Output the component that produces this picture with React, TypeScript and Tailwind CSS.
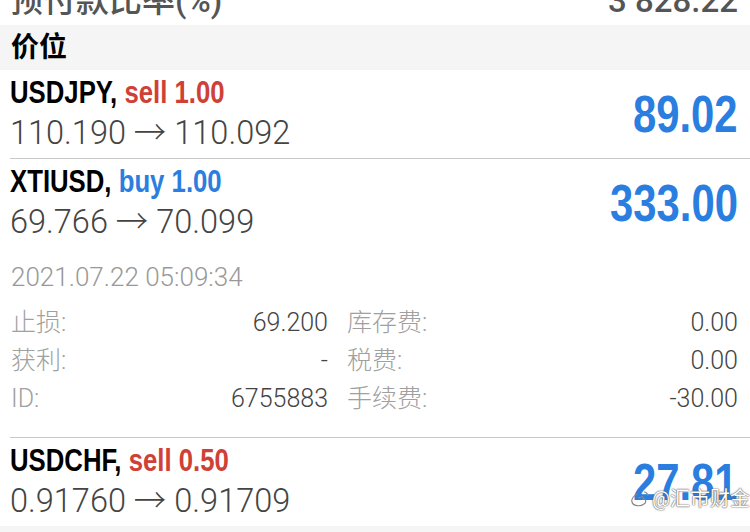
import React from "react";

const cjk = "font-['Roboto','Noto_Sans_CJK_SC',sans-serif]";
const arial = "font-['Liberation_Sans','Noto_Sans_CJK_SC',sans-serif]";

interface Trade {
    symbol: string;
    side: "buy" | "sell";
    lots: string;
    open: string;
    current: string;
    profit: string;
}

const trades: Trade[] = [
    { symbol: "USDJPY", side: "sell", lots: "1.00", open: "110.190", current: "110.092", profit: "89.02" },
    { symbol: "XTIUSD", side: "buy", lots: "1.00", open: "69.766", current: "70.099", profit: "333.00" },
    { symbol: "USDCHF", side: "sell", lots: "0.50", open: "0.91760", current: "0.91709", profit: "27.81" },
];

const TradeRow = (props: { trade: Trade }) => {
    const { trade } = props;
    return (
        <div className="flex h-[88px] items-center justify-between pl-[10px] pr-3">
            <div className="flex flex-col">
                <div className={`${arial} inline-block origin-left scale-x-[0.83] whitespace-nowrap text-[31px] font-bold leading-[38px] text-black`}>
                    {trade.symbol},{" "}
                    <span className={trade.side === "sell" ? "text-[#cf4036]" : "text-[#2a7ee0]"}>
                        {trade.side} {trade.lots}
                    </span>
                </div>
                <div className={`${cjk} text-[32.5px] font-light leading-[42px] text-[#444]`}>
                    {trade.open} → {trade.current}
                </div>
            </div>
            <div className={`${arial} inline-block origin-right scale-x-[0.82] text-[51px] font-bold leading-none text-[#2a7ee0]`}>
                {trade.profit}
            </div>
        </div>
    );
};

const Detail = (props: { label: string; value: string }) => (
    <div className="flex h-[38px] items-center justify-between">
        <span className="text-[#a0a0a0]">{props.label}</span>
        <span className="text-[#444]">{props.value}</span>
    </div>
);

const Separator = () => <div className="ml-[10px] h-px bg-[#c9c9c9]" />;

export default function App() {
    return (
        <div className={`relative h-[532px] w-[750px] overflow-hidden bg-white ${cjk}`}>
            <div className="h-[25px] overflow-hidden">
                <div className="-mt-[16px] flex items-end justify-between pl-[10px] pr-3 text-[33px] font-medium leading-[33px] text-[#555]">
                    <span>预付款比率(%)</span>
                    <span>3 828.22</span>
                </div>
            </div>

            <div className="flex h-[45px] items-center bg-[#f5f5f6] px-[11px] text-[28px] font-bold text-black">
                价位
            </div>

            <TradeRow trade={trades[0]} />
            <Separator />
            <TradeRow trade={trades[1]} />

            <div className="mt-[11px] flex h-[38px] items-center pl-[11px] text-[26px] font-light text-[#999]">
                2021.07.22 05:09:34
            </div>

            <div className="mt-[7px] grid grid-cols-[317px_1fr] gap-x-[19px] pl-[11px] pr-3 text-[25px] font-light leading-none">
                <div className="flex flex-col">
                    <Detail label="止损:" value="69.200" />
                    <Detail label="获利:" value="-" />
                    <Detail label="ID:" value="6755883" />
                </div>
                <div className="flex flex-col">
                    <Detail label="库存费:" value="0.00" />
                    <Detail label="税费:" value="0.00" />
                    <Detail label="手续费:" value="-30.00" />
                </div>
            </div>

            <div className="mt-[20px]">
                <Separator />
            </div>
            <TradeRow trade={trades[2]} />
            <div className="h-[10px] bg-[#f5f5f6]" />

            {/* watermark */}
            <div className="absolute left-[630px] top-[484px] flex items-center gap-[2px] text-[20px] font-normal text-white [text-shadow:0_0_1px_#444,0_0_2px_#666]">
                <svg width="20" height="18" viewBox="0 0 20 18" fill="none" stroke="#888" strokeWidth="1.2">
                    <path d="M8 4c-4 1-7 5-6 8 1 4 8 5 12 2 3-2 2-5-1-5 1-2 0-3-2-2-1 0-2 1-3 1" />
                    <path d="M14 2c2 0 4 2 4 4" />
                </svg>
                <span>@汇市财金</span>
            </div>
        </div>
    );
}
